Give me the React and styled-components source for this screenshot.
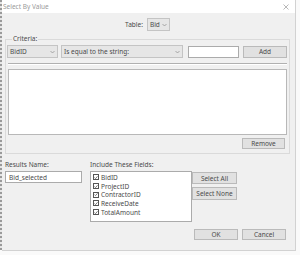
import React from "react";
import styled, { createGlobalStyle } from "styled-components";

const Global = createGlobalStyle`
  * { box-sizing: border-box; }
  html, body { margin: 0; padding: 0; background: #fafafa; }
  body { font-family: "Noto Sans", "Open Sans", sans-serif; font-size: 6.5px; color: #4a4a4a; }
`;

const Page = styled.div`
  display: flex;
  width: 300px;
  height: 255px;
  background: #fafafa;
`;

const LeftStrip = styled.div`
  width: 2px;
  height: 250px;
  background: repeating-linear-gradient(to bottom, #9a9a9a 0 2px, #e6e6e6 2px 4px);
`;

const Window = styled.div`
  width: 294px;
  height: 251px;
  background: #f0f0f0;
  border-right: 1px solid #d2d2d2;
  border-bottom: 1px solid #d2d2d2;
  display: flex;
  flex-direction: column;
`;

const TitleBar = styled.div`
  height: 13px;
  background: #fff;
  display: flex;
  align-items: center;
  justify-content: space-between;
  padding: 0 6px 0 1px;
  color: #9a9a9a;
  font-size: 6.5px;
`;

const Body = styled.div`
  padding: 0 5px 0 3px;
  display: flex;
  flex-direction: column;
`;

const TableRow = styled.div`
  display: flex;
  justify-content: center;
  align-items: center;
  gap: 4px;
  margin-top: 5px;
  height: 13px;
`;

const Label = styled.span`
  font-size: 6.5px;
  line-height: 8px;
  color: #4a4a4a;
  white-space: nowrap;
`;

const SelectBox = styled.div`
  width: ${(p) => p.$w}px;
  height: ${(p) => p.$h || 13}px;
  margin-left: ${(p) => p.$ml || 0}px;
  background: #e6e6e6;
  border: 1px solid #c4c4c4;
  display: flex;
  align-items: center;
  justify-content: space-between;
  padding: 0 2px 0 2px;
  font-size: 6.5px;
  color: #4a4a4a;
  flex-shrink: 0;
`;

const Chevron = () => (
  <svg width="5" height="4" viewBox="0 0 5 4">
    <polyline points="0.5,1 2.5,3 4.5,1" fill="none" stroke="#8a8a8a" strokeWidth="0.7" />
  </svg>
);

const Group = styled.fieldset`
  margin: 4px 0 0 0;
  padding: 2px 1px 4px 1px;
  border: 1px solid #dadada;
  display: flex;
  flex-direction: column;
  min-width: 0;
`;

const Legend = styled.legend`
  margin-left: 5px;
  padding: 0 1px;
  font-size: 6.5px;
  line-height: 8px;
  color: #4a4a4a;
`;

const CriteriaRow = styled.div`
  display: flex;
  align-items: center;
  height: 13px;
`;

const TextInput = styled.div`
  width: ${(p) => p.$w}px;
  height: ${(p) => p.$h || 12}px;
  margin-left: ${(p) => p.$ml || 0}px;
  background: #fff;
  border: 1px solid #ababab;
  display: flex;
  align-items: center;
  padding-left: 3px;
  font-size: 6.5px;
  color: #4a4a4a;
`;

const Button = styled.div`
  width: ${(p) => p.$w || 44}px;
  height: ${(p) => p.$h || 12}px;
  margin-left: ${(p) => p.$ml || 0}px;
  background: #e1e1e1;
  border: 1px solid #bababa;
  display: flex;
  align-items: center;
  justify-content: center;
  font-size: 6.5px;
  color: #4a4a4a;
  flex-shrink: 0;
`;

const Separator = styled.div`
  margin: 5px 1px 0 1px;
  height: 2px;
  border-top: 1px solid #b0b0b0;
  border-bottom: 1px solid #fff;
`;

const ListBox = styled.div`
  margin: 4px 1px 0 1px;
  height: 66px;
  background: #fff;
  border: 1px solid #b8b8b8;
`;

const RightAlign = styled.div`
  display: flex;
  justify-content: flex-end;
  margin-top: 3px;
  padding-right: 3px;
`;

const Bottom = styled.div`
  display: flex;
  margin-top: 7px;
`;

const Column = styled.div`
  display: flex;
  flex-direction: column;
  gap: 2px;
  width: ${(p) => p.$w}px;
  margin-right: ${(p) => p.$mr || 0}px;
`;

const FieldList = styled.div`
  width: 102px;
  height: 51px;
  background: #fff;
  border: 1px solid #ababab;
  padding: 1px 0 0 2px;
  display: flex;
  flex-direction: column;
`;

const FieldItem = styled.div`
  height: 8.7px;
  display: flex;
  align-items: center;
  gap: 2px;
  font-size: 6.5px;
  color: #4a4a4a;
`;

const Check = styled.span`
  width: 6px;
  height: 6px;
  border: 1px solid #555;
  background: #fff;
  display: flex;
  align-items: center;
  justify-content: center;
`;

const ButtonStack = styled.div`
  display: flex;
  flex-direction: column;
  gap: 3px;
  padding-top: 11px;
`;

const Footer = styled.div`
  display: flex;
  justify-content: flex-end;
  gap: 4px;
  margin-top: 7px;
  padding-right: 4px;
`;

const fields = ["BidID", "ProjectID", "ContractorID", "ReceiveDate", "TotalAmount"];

export default function App() {
  return (
    <Page>
      <Global />
      <LeftStrip />
      <Window>
        <TitleBar>
          <span>Select By Value</span>
          <svg width="6" height="6" viewBox="0 0 6 6">
            <path d="M0.5 0.5 L5.5 5.5 M5.5 0.5 L0.5 5.5" stroke="#999" strokeWidth="0.7" />
          </svg>
        </TitleBar>
        <Body>
          <TableRow>
            <Label>Table:</Label>
            <SelectBox $w={23}>
              <span>Bid</span>
              <Chevron />
            </SelectBox>
          </TableRow>
          <Group>
            <Legend>Criteria:</Legend>
            <CriteriaRow>
              <SelectBox $w={51}>
                <span>BidID</span>
                <Chevron />
              </SelectBox>
              <SelectBox $w={122} $ml={3}>
                <span>Is equal to the string:</span>
                <Chevron />
              </SelectBox>
              <TextInput $w={51} $ml={5} />
              <Button $w={44} $ml={4}>Add</Button>
            </CriteriaRow>
            <Separator />
            <ListBox />
            <RightAlign>
              <Button $w={43} $h={11}>Remove</Button>
            </RightAlign>
          </Group>
          <Bottom>
            <Column $w={77} $mr={8}>
              <Label>Results Name:</Label>
              <TextInput $w={77}>Bid_selected</TextInput>
            </Column>
            <Column $w={102}>
              <Label>Include These Fields:</Label>
              <FieldList>
                {fields.map((f) => (
                  <FieldItem key={f}>
                    <Check>
                      <svg width="5" height="5" viewBox="0 0 5 5">
                        <polyline points="0.6,2.6 1.9,3.9 4.4,1" fill="none" stroke="#333" strokeWidth="0.8" />
                      </svg>
                    </Check>
                    <span>{f}</span>
                  </FieldItem>
                ))}
              </FieldList>
            </Column>
            <ButtonStack>
              <Button $w={45}>Select All</Button>
              <Button $w={45} $h={13}>Select None</Button>
            </ButtonStack>
          </Bottom>
          <Footer>
            <Button $w={44} $h={11}>OK</Button>
            <Button $w={44} $h={11}>Cancel</Button>
          </Footer>
        </Body>
      </Window>
    </Page>
  );
}
